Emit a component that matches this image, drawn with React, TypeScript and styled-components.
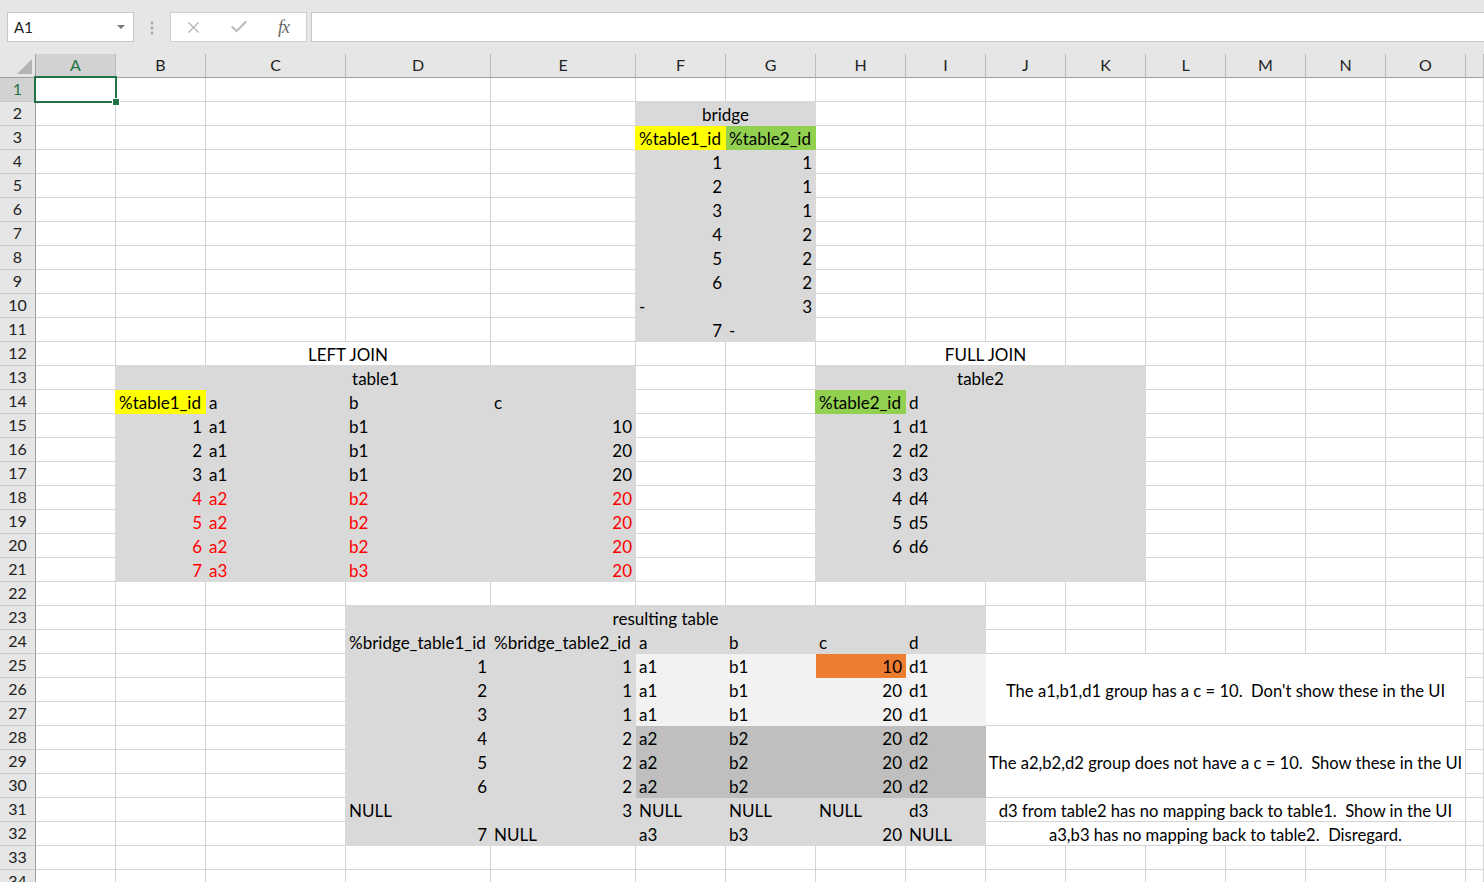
import React from "react";
import styled, { createGlobalStyle } from "styled-components";
import { X, Check } from "lucide-react";

const GRID = "#d4d4d4";
const GREY = "#d9d9d9";
const LIGHT = "#f2f2f2";
const DARK = "#bfbfbf";
const ORANGE = "#ed7d31";
const YELLOW = "#ffff00";
const GREEN = "#92d050";
const RED = "#ff0000";
const EXCEL_GREEN = "#217346";

const COLS = ["A", "B", "C", "D", "E", "F", "G", "H", "I", "J", "K", "L", "M", "N", "O", "P"];
const ROWS = 34;

type Align = "left" | "right" | "center";
type CellSpec = { v?: string; align?: Align; fill?: string; color?: string; cs?: number; rs?: number; note?: boolean };

// ---- sheet data ----
const sheet: Record<string, CellSpec> = {};
const covered = new Set<string>();
const ref = (c: number, r: number) => String.fromCharCode(65 + c) + r;
const parse = (a: string) => ({ c: a.charCodeAt(0) - 65, r: parseInt(a.slice(1), 10) });
const cell = (a: string): CellSpec => (sheet[a] = sheet[a] || {});

function fill(range: string, color: string) {
  const [a, b] = range.split(":");
  const s = parse(a);
  const e = parse(b ?? a);
  for (let r = s.r; r <= e.r; r++) for (let c = s.c; c <= e.c; c++) cell(ref(c, r)).fill = color;
}

function merge(range: string, v: string, note = false) {
  const [a, b] = range.split(":");
  const s = parse(a);
  const e = parse(b);
  const top = cell(a);
  top.v = v;
  top.align = "center";
  top.note = note;
  top.cs = e.c - s.c + 1;
  top.rs = e.r - s.r + 1;
  for (let r = s.r; r <= e.r; r++)
    for (let c = s.c; c <= e.c; c++) if (r !== s.r || c !== s.c) covered.add(ref(c, r));
}

function row(startCol: string, r: number, values: (string | number | null)[], color?: string) {
  values.forEach((v, i) => {
    if (v === null) return;
    const c = cell(ref(startCol.charCodeAt(0) - 65 + i, r));
    c.v = String(v);
    c.align = typeof v === "number" ? "right" : "left";
    if (color) c.color = color;
  });
}

// bridge
fill("F2:G11", GREY);
fill("F3", YELLOW);
fill("G3", GREEN);
merge("F2:G2", "bridge");
row("F", 3, ["%table1_id", "%table2_id"]);
[[1, 1], [2, 1], [3, 1], [4, 2], [5, 2], [6, 2]].forEach((p, i) => row("F", 4 + i, p));
row("F", 10, ["-", 3]);
row("F", 11, [7, "-"]);

// table1
merge("C12:D12", "LEFT JOIN");
fill("B13:E21", GREY);
fill("B14", YELLOW);
merge("B13:E13", "table1");
row("B", 14, ["%table1_id", "a", "b", "c"]);
const t1: [number, string, string, number][] = [
  [1, "a1", "b1", 10], [2, "a1", "b1", 20], [3, "a1", "b1", 20],
  [4, "a2", "b2", 20], [5, "a2", "b2", 20], [6, "a2", "b2", 20], [7, "a3", "b3", 20],
];
t1.forEach((v, i) => row("B", 15 + i, v, i >= 3 ? RED : undefined));

// table2
merge("I12:J12", "FULL JOIN");
fill("H13:K21", GREY);
fill("H14", GREEN);
merge("H13:K13", "table2");
row("H", 14, ["%table2_id", "d"]);
[1, 2, 3, 4, 5, 6].forEach((n, i) => row("H", 15 + i, [n, "d" + n]));

// resulting table
fill("D23:I32", GREY);
fill("F25:I27", LIGHT);
fill("F28:I30", DARK);
fill("H25", ORANGE);
merge("D23:I23", "resulting table");
row("D", 24, ["%bridge_table1_id", "%bridge_table2_id", "a", "b", "c", "d"]);
const res: (string | number)[][] = [
  [1, 1, "a1", "b1", 10, "d1"], [2, 1, "a1", "b1", 20, "d1"], [3, 1, "a1", "b1", 20, "d1"],
  [4, 2, "a2", "b2", 20, "d2"], [5, 2, "a2", "b2", 20, "d2"], [6, 2, "a2", "b2", 20, "d2"],
  ["NULL", 3, "NULL", "NULL", "NULL", "d3"], [7, "NULL", "a3", "b3", 20, "NULL"],
];
res.forEach((v, i) => row("D", 25 + i, v));

// notes
merge("J25:O27", "The a1,b1,d1 group has a c = 10.  Don't show these in the UI", true);
merge("J28:O30", "The a2,b2,d2 group does not have a c = 10.  Show these in the UI", true);
merge("J31:O31", "d3 from table2 has no mapping back to table1.  Show in the UI", true);
merge("J32:O32", "a3,b3 has no mapping back to table2.  Disregard.", true);

// gridline hidden next to a filled neighbour
const lineColor = (own?: string, neighbour?: string) => own ?? neighbour ?? GRID;

// ---- styles ----
const GlobalStyle = createGlobalStyle`
  html, body {
    margin: 0;
    padding: 0;
    overflow: hidden;
    background: #e6e6e6;
  }
  body {
    font-family: Lato, "Liberation Sans", sans-serif;
  }
`;

const Page = styled.div`
  width: 1484px;
  height: 882px;
  display: flex;
  flex-direction: column;
  overflow: hidden;
`;

const Toolbar = styled.div`
  height: 54px;
  box-sizing: border-box;
  padding: 12px 0 0 7px;
  display: flex;
  align-items: flex-start;
  background: #e6e6e6;
`;

const NameBox = styled.div`
  width: 127px;
  height: 30px;
  box-sizing: border-box;
  background: #fff;
  border: 1px solid #c6c6c6;
  display: flex;
  align-items: center;
  justify-content: space-between;
  padding: 0 8px 0 6px;
  font-size: 15px;
  color: #222;
`;

const Caret = styled.span`
  width: 0;
  height: 0;
  border-left: 4px solid transparent;
  border-right: 4px solid transparent;
  border-top: 4px solid #777;
`;

const Grip = styled.svg`
  margin: 9px 0 0 15px;
  width: 6px;
  height: 14px;
`;

const FnBox = styled.div`
  margin-left: 15px;
  width: 137px;
  height: 30px;
  box-sizing: border-box;
  background: #fff;
  border: 1px solid #d0d0d0;
  display: grid;
  grid-template-columns: repeat(3, 1fr);
  align-items: center;
  justify-items: center;
`;

const FxLabel = styled.span`
  font-family: "Liberation Serif", "DejaVu Serif", serif;
  font-style: italic;
  font-size: 18px;
  color: #666;
  letter-spacing: -1px;
`;

const FormulaInput = styled.div`
  margin-left: 4px;
  flex: 1;
  height: 30px;
  box-sizing: border-box;
  background: #fff;
  border: 1px solid #c6c6c6;
  border-right: none;
`;

const Sheet = styled.div`
  flex: 1;
  display: grid;
  grid-template-columns: 36px 80px 90px 140px 145px 145px 90px 90px 90px 80px repeat(6, 80px) 1fr;
  grid-auto-rows: 24px;
  background: #fff;
  overflow: hidden;
`;

const Corner = styled.div`
  position: relative;
  background: #e6e6e6;
  border-right: 1px solid #9e9e9e;
  border-bottom: 1px solid #9e9e9e;
  &::after {
    content: "";
    position: absolute;
    right: 3px;
    bottom: 3px;
    border-left: 15px solid transparent;
    border-bottom: 15px solid #b4b4b4;
  }
`;

const ColHead = styled.div<{ $selected?: boolean }>`
  background: ${(p) => (p.$selected ? "#d2d2d2" : "#e6e6e6")};
  color: ${(p) => (p.$selected ? EXCEL_GREEN : "#222")};
  border-right: 1px solid #bcbcbc;
  border-bottom: 1px solid #9e9e9e;
  display: flex;
  align-items: center;
  justify-content: center;
  font-size: 16px;
  padding-bottom: 3px;
`;

const RowHead = styled.div<{ $selected?: boolean }>`
  background: ${(p) => (p.$selected ? "#d2d2d2" : "#e6e6e6")};
  color: ${(p) => (p.$selected ? EXCEL_GREEN : "#222")};
  border-right: 1px solid #9e9e9e;
  border-bottom: 1px solid #c8c8c8;
  display: flex;
  align-items: center;
  justify-content: center;
  font-size: 16px;
  padding-bottom: 3px;
`;

const Cell = styled.div<{
  $fill?: string;
  $color?: string;
  $align: Align;
  $cs: number;
  $rs: number;
  $lineRight: string;
  $lineBottom: string;
  $note?: boolean;
}>`
  grid-column: span ${(p) => p.$cs};
  grid-row: span ${(p) => p.$rs};
  min-width: 0;
  display: flex;
  align-items: center;
  justify-content: ${(p) => (p.$align === "right" ? "flex-end" : p.$align === "center" ? "center" : "flex-start")};
  padding: 2px 3px 0 3px;
  background: ${(p) => p.$fill ?? "#fff"};
  border-right: 1px solid ${(p) => p.$lineRight};
  border-bottom: 1px solid ${(p) => p.$lineBottom};
  color: ${(p) => p.$color ?? "#000"};
  font-size: ${(p) => (p.$note ? "16.6px" : "17px")};
  white-space: pre;
`;

const ActiveCell = styled(Cell)`
  position: relative;
`;

const Selection = styled.div`
  position: absolute;
  top: -2px;
  left: -2px;
  right: -2px;
  bottom: -2px;
  border: 2px solid ${EXCEL_GREEN};
  z-index: 2;
  &::after {
    content: "";
    position: absolute;
    right: -5px;
    bottom: -5px;
    width: 6px;
    height: 6px;
    background: ${EXCEL_GREEN};
    border: 1px solid #fff;
  }
`;

function renderCells() {
  const out: React.ReactNode[] = [];
  for (let r = 1; r <= ROWS; r++) {
    out.push(
      <RowHead key={"h" + r} $selected={r === 1}>
        {r}
      </RowHead>
    );
    for (let c = 0; c < COLS.length; c++) {
      const id = ref(c, r);
      if (covered.has(id)) continue;
      const spec = sheet[id] || {};
      const cs = spec.cs ?? 1;
      const rs = spec.rs ?? 1;
      const right = sheet[ref(c + cs, r)]?.fill;
      const below = sheet[ref(c, r + rs)]?.fill;
      const props = {
        $fill: spec.fill,
        $color: spec.color,
        $align: spec.align ?? "left",
        $cs: cs,
        $rs: rs,
        $note: spec.note,
        $lineRight: lineColor(spec.fill, right),
        $lineBottom: lineColor(spec.fill, below),
      };
      if (id === "A1") {
        out.push(
          <ActiveCell key={id} {...props}>
            <Selection />
          </ActiveCell>
        );
      } else {
        out.push(
          <Cell key={id} {...props}>
            {spec.v}
          </Cell>
        );
      }
    }
  }
  return out;
}

export default function App() {
  return (
    <>
      <GlobalStyle />
      <Page>
        <Toolbar>
          <NameBox>
            A1
            <Caret />
          </NameBox>
          <Grip viewBox="0 0 6 14">
            <circle cx="3" cy="2" r="1.4" fill="#a8a8a8" />
            <circle cx="3" cy="7" r="1.4" fill="#a8a8a8" />
            <circle cx="3" cy="12" r="1.4" fill="#a8a8a8" />
          </Grip>
          <FnBox>
            <X size={19} strokeWidth={1.4} color="#b0b0b0" />
            <Check size={20} strokeWidth={2.4} color="#b8b8b8" />
            <FxLabel>fx</FxLabel>
          </FnBox>
          <FormulaInput />
        </Toolbar>
        <Sheet>
          <Corner />
          {COLS.map((l, i) => (
            <ColHead key={l} $selected={i === 0}>
              {l === "P" ? "" : l}
            </ColHead>
          ))}
          {renderCells()}
        </Sheet>
      </Page>
    </>
  );
}
